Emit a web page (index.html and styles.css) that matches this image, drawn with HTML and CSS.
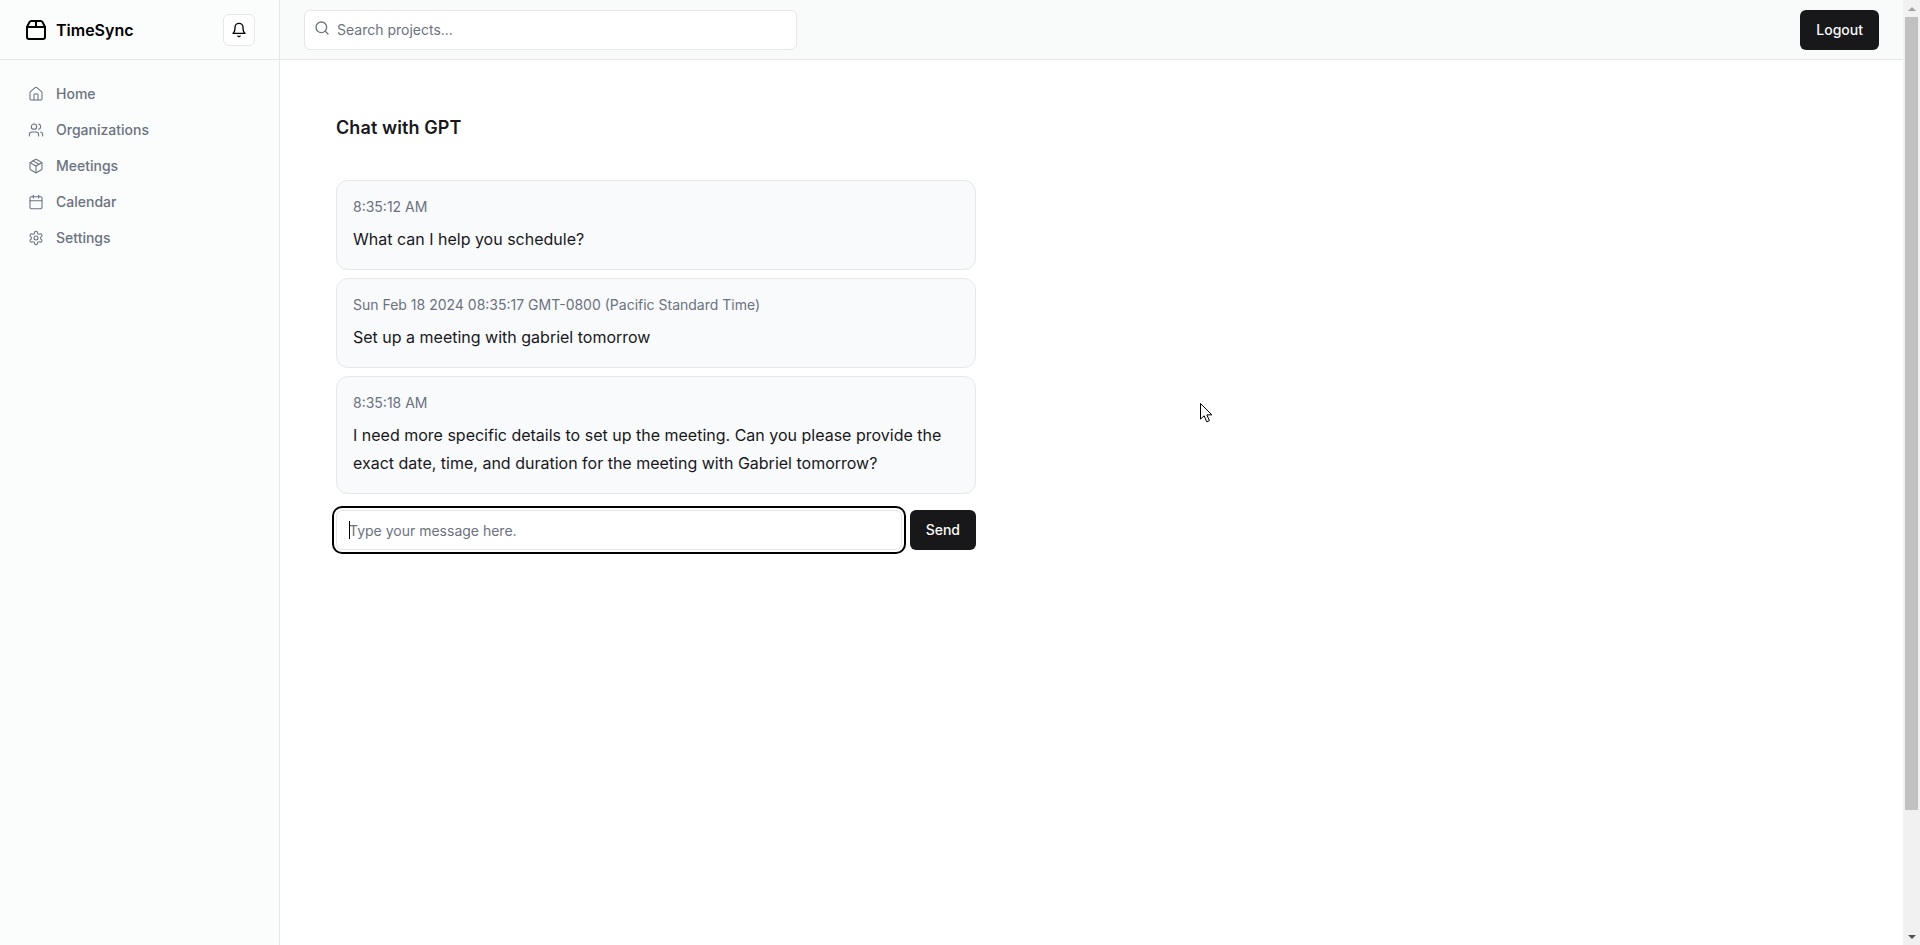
FILE: index.html
```html
<!DOCTYPE html>
<html lang="en">
<head>
<meta charset="utf-8">
<title>TimeSync</title>
<link rel="stylesheet" href="styles.css">
</head>
<body>
<div class="app">
  <aside class="sidebar">
    <div class="brand-bar">
      <a class="brand">
        <svg class="icon-brand" viewBox="0 0 24 24"><path d="M3 9h18v10a2 2 0 0 1-2 2H5a2 2 0 0 1-2-2V9Z"/><path d="m3 9 2.45-4.9A2 2 0 0 1 7.24 3h9.52a2 2 0 0 1 1.8 1.1L21 9"/><path d="M12 3v6"/></svg>
        <span>TimeSync</span>
      </a>
      <button class="bell">
        <svg class="icon" viewBox="0 0 24 24"><path d="M6 8a6 6 0 0 1 12 0c0 7 3 9 3 9H3s3-2 3-9"/><path d="M10.3 21a1.94 1.94 0 0 0 3.4 0"/></svg>
      </button>
    </div>
    <nav class="nav">
      <a class="nav-item"><svg class="icon" viewBox="0 0 24 24"><path d="M15 21v-8a1 1 0 0 0-1-1h-4a1 1 0 0 0-1 1v8"/><path d="M3 10a2 2 0 0 1 .709-1.528l7-5.999a2 2 0 0 1 2.582 0l7 5.999A2 2 0 0 1 21 10v9a2 2 0 0 1-2 2H5a2 2 0 0 1-2-2z"/></svg>Home</a>
      <a class="nav-item"><svg class="icon" viewBox="0 0 24 24"><path d="M16 21v-2a4 4 0 0 0-4-4H6a4 4 0 0 0-4 4v2"/><circle cx="9" cy="7" r="4"/><path d="M22 21v-2a4 4 0 0 0-3-3.87"/><path d="M16 3.13a4 4 0 0 1 0 7.75"/></svg>Organizations</a>
      <a class="nav-item"><svg class="icon" viewBox="0 0 24 24"><path d="m7.5 4.27 9 5.15"/><path d="M21 8a2 2 0 0 0-1-1.73l-7-4a2 2 0 0 0-2 0l-7 4A2 2 0 0 0 3 8v8a2 2 0 0 0 1 1.73l7 4a2 2 0 0 0 2 0l7-4A2 2 0 0 0 21 16Z"/><path d="m3.3 7 8.7 5 8.7-5"/><path d="M12 22V12"/></svg>Meetings</a>
      <a class="nav-item"><svg class="icon" viewBox="0 0 24 24"><rect width="18" height="18" x="3" y="4" rx="2"/><path d="M16 2v4"/><path d="M8 2v4"/><path d="M3 10h18"/></svg>Calendar</a>
      <a class="nav-item"><svg class="icon" viewBox="0 0 24 24"><path d="M12.22 2h-.44a2 2 0 0 0-2 2v.18a2 2 0 0 1-1 1.73l-.43.25a2 2 0 0 1-2 0l-.15-.08a2 2 0 0 0-2.73.73l-.22.38a2 2 0 0 0 .73 2.73l.15.1a2 2 0 0 1 1 1.72v.51a2 2 0 0 1-1 1.74l-.15.09a2 2 0 0 0-.73 2.73l.22.38a2 2 0 0 0 2.73.73l.15-.08a2 2 0 0 1 2 0l.43.25a2 2 0 0 1 1 1.73V20a2 2 0 0 0 2 2h.44a2 2 0 0 0 2-2v-.18a2 2 0 0 1 1-1.73l.43-.25a2 2 0 0 1 2 0l.15.08a2 2 0 0 0 2.73-.73l.22-.39a2 2 0 0 0-.73-2.73l-.15-.08a2 2 0 0 1-1-1.74v-.5a2 2 0 0 1 1-1.74l.15-.09a2 2 0 0 0 .73-2.73l-.22-.38a2 2 0 0 0-2.73-.73l-.15.08a2 2 0 0 1-2 0l-.43-.25a2 2 0 0 1-1-1.73V4a2 2 0 0 0-2-2z"/><circle cx="12" cy="12" r="3"/></svg>Settings</a>
    </nav>
  </aside>
  <div class="content">
    <header class="topbar">
      <div class="search">
        <svg class="icon search-icon" viewBox="0 0 24 24"><circle cx="11" cy="11" r="8"/><path d="m21 21-4.3-4.3"/></svg>
        <input class="search-input" type="text" placeholder="Search projects...">
      </div>
      <button class="btn btn-logout">Logout</button>
    </header>
    <main class="main">
      <h1 class="title">Chat with GPT</h1>
      <div class="chat">
        <div class="message">
          <div class="stamp">8:35:12 AM</div>
          <p class="body-text">What can I help you schedule?</p>
        </div>
        <div class="message">
          <div class="stamp">Sun Feb 18 2024 08:35:17 GMT-0800 (Pacific Standard Time)</div>
          <p class="body-text">Set up a meeting with gabriel tomorrow</p>
        </div>
        <div class="message">
          <div class="stamp">8:35:18 AM</div>
          <p class="body-text">I need more specific details to set up the meeting. Can you please provide the exact date, time, and duration for the meeting with Gabriel tomorrow?</p>
        </div>
        <form class="composer">
          <div class="field">
            <input class="field-input" type="text" placeholder="Type your message here.">
            <span class="caret"></span>
          </div>
          <button class="btn" type="button">Send</button>
        </form>
      </div>
    </main>
  </div>
  <div class="scrollbar">
    <div class="arrow arrow-up"></div>
    <div class="track"><div class="thumb"></div></div>
    <div class="arrow arrow-down"></div>
  </div>
  <svg class="cursor" width="13" height="20" viewBox="0 0 13 20"><path d="M.5.5v15.6l3.7-3.3 2.5 6 2.7-1.1-2.5-5.8h5z"/></svg>
</div>
</body>
</html>
```

FILE: styles.css
```css
* { box-sizing: border-box; }
html, body { margin: 0; height: 100%; overflow: hidden; }
body { font-family: Inter, "Liberation Sans", sans-serif; color: #09090b; background: #fff; }

.app { display: flex; height: 945px; position: relative; }

.icon, .icon-brand {
  width: 16px; height: 16px; flex: none;
  fill: none; stroke: currentColor; stroke-width: 2;
  stroke-linecap: round; stroke-linejoin: round;
}
.icon-brand { width: 24px; height: 24px; }

.sidebar { width: 280px; flex: none; background: #fbfcfc; border-right: 1px solid #e5e7eb; }
.brand-bar {
  height: 60px; display: flex; align-items: center; justify-content: space-between;
  padding: 0 24px; border-bottom: 1px solid #e5e7eb;
}
.brand { display: flex; align-items: center; gap: 8px; font-size: 16px; font-weight: 600; color: #000; }
.bell {
  width: 32px; height: 32px; padding: 0; display: flex; align-items: center; justify-content: center;
  background: #fff; border: 1px solid #e5e7eb; border-radius: 6px; color: #000;
}
.nav { padding: 16px; display: flex; flex-direction: column; }
.nav-item {
  display: flex; align-items: center; gap: 12px; height: 36px; padding: 0 12px;
  font-size: 14px; line-height: 20px; font-weight: 500; color: #6b7280;
}
.nav-item .icon { stroke-width: 1.6; }

.content { flex: 1; min-width: 0; display: flex; flex-direction: column; }
.topbar {
  height: 60px; flex: none; display: flex; align-items: center; justify-content: space-between;
  padding: 0 24px; background: #f9fafa; border-bottom: 1px solid #e5e7eb;
}
.search { position: relative; width: 493px; }
.search-icon { position: absolute; left: 10px; top: 10px; color: #6b7280; }
.search-input {
  display: block; width: 100%; height: 40px; padding: 8px 12px 8px 32px;
  font: 14px/20px Inter, "Liberation Sans", sans-serif; color: #09090b;
  background: #fff; border: 1px solid #e5e7eb; border-radius: 6px; outline: none;
}
.search-input::placeholder, .field-input::placeholder { color: #6b7280; opacity: 1; }

.btn {
  height: 40px; padding: 0 16px; border: 0; border-radius: 6px;
  background: #18181b; color: #fafafa;
  font: 500 14px/20px Inter, "Liberation Sans", sans-serif;
}

.main { padding: 54px 56px 56px; }
.title { margin: 0; font-size: 18px; line-height: 28px; font-weight: 600; letter-spacing: 0.1px; color: #18181b; }
.chat { width: 640px; margin-top: 38px; display: flex; flex-direction: column; gap: 8px; }
.message { padding: 16px; background: #f9fafb; border: 1px solid #e5e7eb; border-radius: 12px; }
.stamp { font-size: 14px; line-height: 20px; color: #6b7280; }
.body-text { margin: 8px 0 0; font-size: 16px; line-height: 28px; color: #18181b; }

.composer { display: flex; gap: 8px; margin-top: 8px; }
.field { position: relative; flex: 1; }
.field-input {
  display: block; width: 100%; height: 40px; padding: 8px 12px;
  font: 14px/20px Inter, "Liberation Sans", sans-serif;
  background: #fff; border: 1px solid #e5e7eb; border-radius: 6px; outline: none;
  box-shadow: 0 0 0 2px #fff, 0 0 0 4px #000;
}
.caret { position: absolute; left: 13px; top: 11px; width: 1px; height: 18px; background: #000; }

.scrollbar { width: 17px; flex: none; display: flex; flex-direction: column; background: #f1f1f1; }
.arrow { height: 17px; flex: none; display: flex; align-items: center; justify-content: center; }
.arrow::before { content: ""; border-left: 4px solid transparent; border-right: 4px solid transparent; }
.arrow-up::before { border-bottom: 4px solid #a3a3a3; }
.arrow-down::before { border-top: 4px solid #505050; }
.track { flex: 1; padding: 0 2px; }
.thumb { height: 793px; background: #c1c1c1; }

.cursor { position: absolute; left: 1200px; top: 403px; fill: #fff; stroke: #000; stroke-width: 1; }
```
